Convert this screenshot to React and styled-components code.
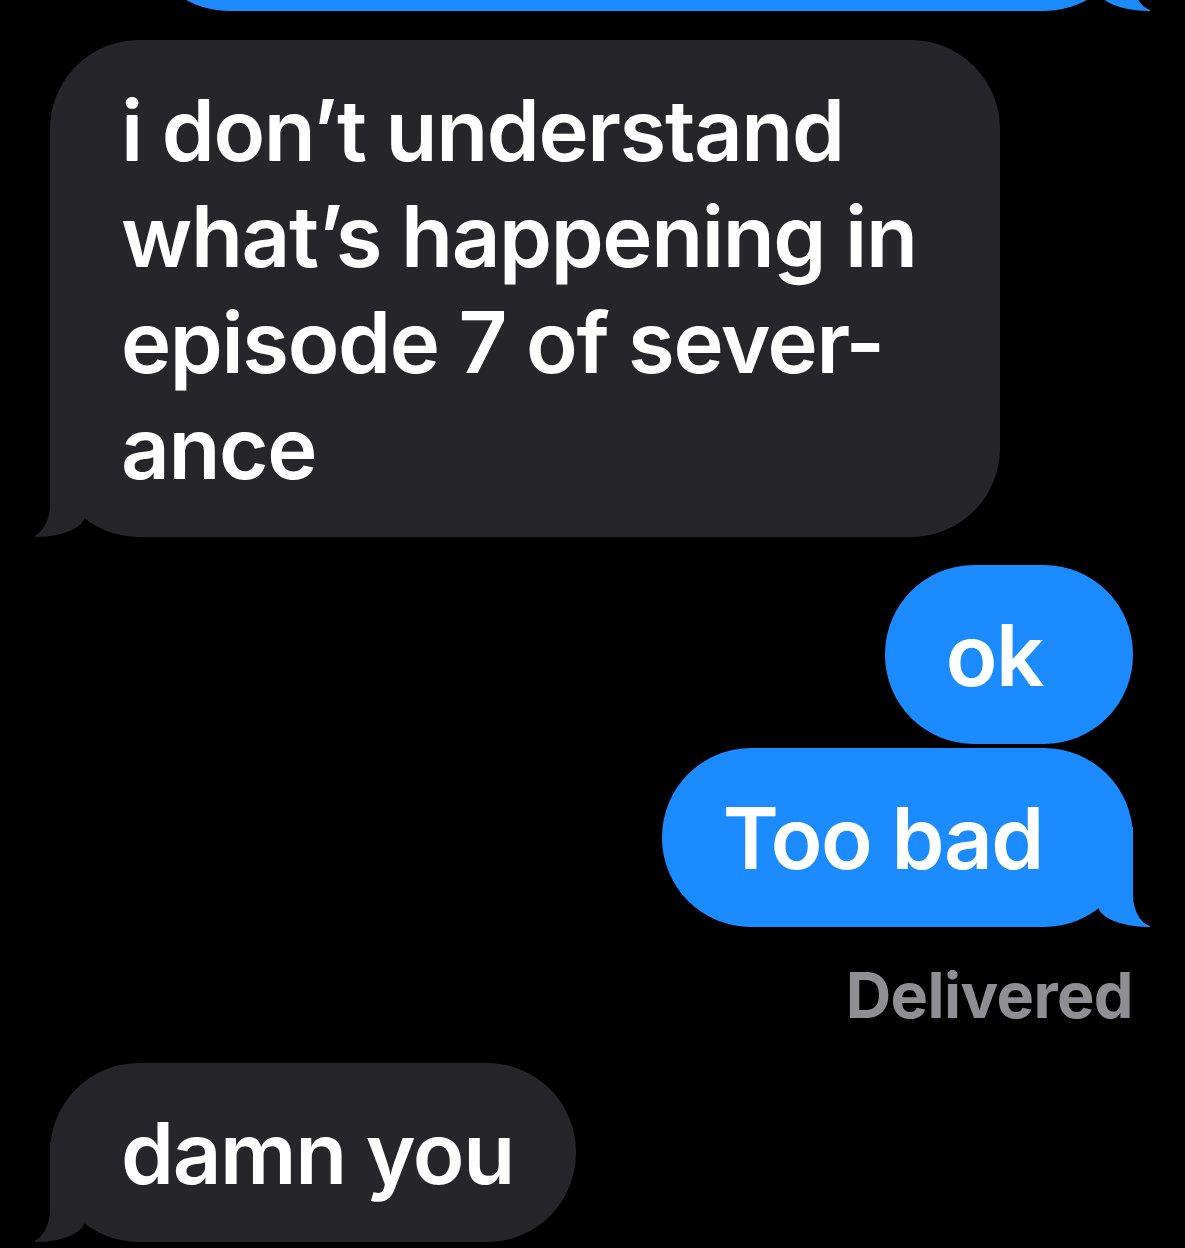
import React from 'react';
import styled, { createGlobalStyle, css } from 'styled-components';

const BLUE = '#1c8bff';
const GRAY = '#26252a';
const BG = '#000000';

const Global = createGlobalStyle`
  html, body { margin: 0; padding: 0; background: ${BG}; }
  body {
    font-family: Inter, "Noto Sans", "Liberation Sans", sans-serif;
    -webkit-font-smoothing: antialiased;
  }
`;

const Thread = styled.main`
  display: flex;
  flex-direction: column;
  box-sizing: border-box;
  height: 1248px;
  padding: 0 52px 0 50px;
  overflow: hidden;
  background: ${BG};
`;

const meTail = css`
  &::before {
    content: '';
    position: absolute;
    bottom: 0;
    right: -17px;
    width: 52px;
    height: 100px;
    background: ${BLUE};
    border-bottom-left-radius: 50px 22px;
  }
  &::after {
    content: '';
    position: absolute;
    bottom: 0;
    right: -40px;
    width: 40px;
    height: 110px;
    background: ${BG};
    border-bottom-left-radius: 22px 32px;
  }
`;

const themTail = css`
  &::before {
    content: '';
    position: absolute;
    bottom: 0;
    left: -15px;
    width: 50px;
    height: 100px;
    background: ${GRAY};
    border-bottom-right-radius: 48px 22px;
  }
  &::after {
    content: '';
    position: absolute;
    bottom: 0;
    left: -40px;
    width: 40px;
    height: 110px;
    background: ${BG};
    border-bottom-right-radius: 22px 32px;
  }
`;

const Bubble = styled.div`
  position: relative;
  box-sizing: border-box;
  flex: none;
  align-self: ${(p) => (p.$me ? 'flex-end' : 'flex-start')};
  margin-top: ${(p) => p.$gap || 0}px;
  width: ${(p) => (p.$width ? `${p.$width}px` : 'auto')};
  padding-top: 38px;
  padding-bottom: 35px;
  padding-left: ${(p) => (p.$me ? 61 : 71)}px;
  padding-right: ${(p) => (p.$me ? 90 : 62)}px;
  border-radius: 89px;
  background: ${(p) => (p.$me ? BLUE : GRAY)};
  color: #ffffff;
  font-size: 85px;
  font-weight: 600;
  line-height: 106px;
  letter-spacing: -1.4px;
  white-space: nowrap;
  ${(p) => p.$tail && (p.$me ? meTail : themTail)}
`;

const Status = styled.div`
  align-self: flex-end;
  margin: 30px 0;
  color: #8e8e93;
  font-size: 63px;
  font-weight: 700;
  line-height: 76px;
  letter-spacing: -0.6px;
`;

export default function App() {
  return (
    <>
      <Global />
      <Thread>
        <Bubble $me $tail $gap={-168} $width={993} aria-hidden="true">
          {'\u00a0'}
        </Bubble>
        <Bubble $tail $gap={29} $width={950}>
          i don’t understand
          <br />
          what’s happening in
          <br />
          episode 7 of sever-
          <br />
          ance
        </Bubble>
        <Bubble $me $gap={28}>ok</Bubble>
        <Bubble $me $tail $gap={4}>Too bad</Bubble>
        <Status>Delivered</Status>
        <Bubble $tail>damn you</Bubble>
      </Thread>
    </>
  );
}
